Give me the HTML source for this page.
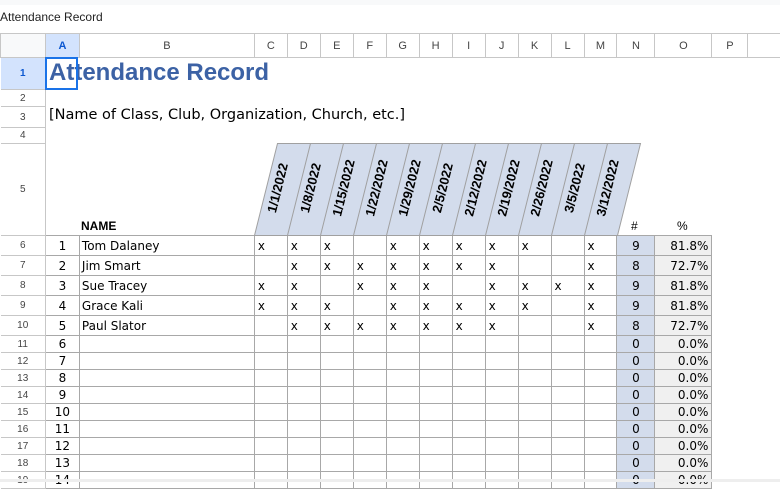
<!DOCTYPE html>
<html><head><meta charset="utf-8"><style>
*{margin:0;padding:0;box-sizing:border-box}
body{width:780px;height:482px;overflow:hidden;background:#fff;font-family:"Liberation Sans",sans-serif;position:relative}
#top{position:absolute;left:0;top:0;width:780px;height:5px;background:#f8f9fa}
#ttl{position:absolute;left:0;top:10px;font-size:12px;color:#222}
table{position:absolute;left:0;top:33px;border-collapse:collapse;table-layout:fixed}
td{padding:0;font-size:13px;white-space:nowrap;overflow:hidden;vertical-align:middle}
.ch td{height:24px;text-align:center;font-size:11px;color:#444;border:1px solid #c7c7c7;border-top:1px solid #c7c7c7}
td.rh{text-align:center;font-size:10px;color:#444;border-right:1px solid #c7c7c7;border-bottom:1px solid #c7c7c7;background:#fff}
td.sel{background:#d3e3fd;color:#0b57d0;font-weight:bold}
.d td{font-family:"DejaVu Sans",sans-serif;font-size:12px;color:#000;border:1px solid #a8a8a8}
.d td.rh{font-family:"Liberation Sans",sans-serif;font-size:10px;color:#444;border:none;border-right:1px solid #c7c7c7;border-bottom:1px solid #c7c7c7}
.d td.a{text-align:center}
.d td.b{padding-left:2px}
.d td.x{padding-left:3px}
.d td.n{background:#d3dcec;text-align:center}
.d td.o{background:#f0f0f0;text-align:right;padding-right:3px}
.d td.p,.d td.q{border:none}
.r6 td{height:20px}
.r11 td{height:17px}
#t1{position:absolute;left:49px;top:59px;font-size:24px;font-weight:bold;color:#3c62a5}
#t2{position:absolute;left:49px;top:107px;font-family:"DejaVu Sans",sans-serif;font-size:14.5px;color:#000}
#nm{position:absolute;left:81px;top:219px;font-size:12px;font-weight:bold}
#hs{position:absolute;left:631px;top:219px;font-size:12px}
#pc{position:absolute;left:677px;top:219px;font-size:12px}
#sel{position:absolute;left:45px;top:57px;width:33px;height:33px;border:2px solid #1a73e8}
#sb{position:absolute;left:0;top:479px;width:780px;height:3px;background:#eee}
</style></head><body>
<div id="top"></div>
<div id="ttl">Attendance Record</div>
<table>
<colgroup><col style="width:45px"><col style="width:34px"><col style="width:175px"><col style="width:33px"><col style="width:33px"><col style="width:33px"><col style="width:33px"><col style="width:33px"><col style="width:33px"><col style="width:33px"><col style="width:33px"><col style="width:33px"><col style="width:33px"><col style="width:33px"><col style="width:38px"><col style="width:57px"><col style="width:36px"><col style="width:32px"></colgroup>
<tr class="ch"><td style="background:#f8f9fa"></td><td class="sel" style="color:#0b57d0">A</td><td>B</td><td>C</td><td>D</td><td>E</td><td>F</td><td>G</td><td>H</td><td>I</td><td>J</td><td>K</td><td>L</td><td>M</td><td>N</td><td>O</td><td>P</td><td style="border-right:none"></td></tr>
<tr><td class="rh sel" style="height:32px">1</td><td colspan="17"></td></tr>
<tr><td class="rh" style="height:17px">2</td><td colspan="17"></td></tr>
<tr><td class="rh" style="height:21px">3</td><td colspan="17"></td></tr>
<tr><td class="rh" style="height:16px">4</td><td colspan="17"></td></tr>
<tr><td class="rh" style="height:92px">5</td><td colspan="17"></td></tr>
<tr class="d r6"><td class="rh">6</td><td class="a">1</td><td class="b">Tom Dalaney</td><td class="x">x</td><td class="x">x</td><td class="x">x</td><td></td><td class="x">x</td><td class="x">x</td><td class="x">x</td><td class="x">x</td><td class="x">x</td><td></td><td class="x">x</td><td class="n">9</td><td class="o">81.8%</td><td class="p"></td><td class="q"></td></tr>
<tr class="d r6"><td class="rh">7</td><td class="a">2</td><td class="b">Jim Smart</td><td></td><td class="x">x</td><td class="x">x</td><td class="x">x</td><td class="x">x</td><td class="x">x</td><td class="x">x</td><td class="x">x</td><td></td><td></td><td class="x">x</td><td class="n">8</td><td class="o">72.7%</td><td class="p"></td><td class="q"></td></tr>
<tr class="d r6"><td class="rh">8</td><td class="a">3</td><td class="b">Sue Tracey</td><td class="x">x</td><td class="x">x</td><td></td><td class="x">x</td><td class="x">x</td><td class="x">x</td><td></td><td class="x">x</td><td class="x">x</td><td class="x">x</td><td class="x">x</td><td class="n">9</td><td class="o">81.8%</td><td class="p"></td><td class="q"></td></tr>
<tr class="d r6"><td class="rh">9</td><td class="a">4</td><td class="b">Grace Kali</td><td class="x">x</td><td class="x">x</td><td class="x">x</td><td></td><td class="x">x</td><td class="x">x</td><td class="x">x</td><td class="x">x</td><td class="x">x</td><td></td><td class="x">x</td><td class="n">9</td><td class="o">81.8%</td><td class="p"></td><td class="q"></td></tr>
<tr class="d r6"><td class="rh">10</td><td class="a">5</td><td class="b">Paul Slator</td><td></td><td class="x">x</td><td class="x">x</td><td class="x">x</td><td class="x">x</td><td class="x">x</td><td class="x">x</td><td class="x">x</td><td></td><td></td><td class="x">x</td><td class="n">8</td><td class="o">72.7%</td><td class="p"></td><td class="q"></td></tr>
<tr class="d r11"><td class="rh">11</td><td class="a">6</td><td></td><td></td><td></td><td></td><td></td><td></td><td></td><td></td><td></td><td></td><td></td><td></td><td class="n">0</td><td class="o">0.0%</td><td class="p"></td><td class="q"></td></tr>
<tr class="d r11"><td class="rh">12</td><td class="a">7</td><td></td><td></td><td></td><td></td><td></td><td></td><td></td><td></td><td></td><td></td><td></td><td></td><td class="n">0</td><td class="o">0.0%</td><td class="p"></td><td class="q"></td></tr>
<tr class="d r11"><td class="rh">13</td><td class="a">8</td><td></td><td></td><td></td><td></td><td></td><td></td><td></td><td></td><td></td><td></td><td></td><td></td><td class="n">0</td><td class="o">0.0%</td><td class="p"></td><td class="q"></td></tr>
<tr class="d r11"><td class="rh">14</td><td class="a">9</td><td></td><td></td><td></td><td></td><td></td><td></td><td></td><td></td><td></td><td></td><td></td><td></td><td class="n">0</td><td class="o">0.0%</td><td class="p"></td><td class="q"></td></tr>
<tr class="d r11"><td class="rh">15</td><td class="a">10</td><td></td><td></td><td></td><td></td><td></td><td></td><td></td><td></td><td></td><td></td><td></td><td></td><td class="n">0</td><td class="o">0.0%</td><td class="p"></td><td class="q"></td></tr>
<tr class="d r11"><td class="rh">16</td><td class="a">11</td><td></td><td></td><td></td><td></td><td></td><td></td><td></td><td></td><td></td><td></td><td></td><td></td><td class="n">0</td><td class="o">0.0%</td><td class="p"></td><td class="q"></td></tr>
<tr class="d r11"><td class="rh">17</td><td class="a">12</td><td></td><td></td><td></td><td></td><td></td><td></td><td></td><td></td><td></td><td></td><td></td><td></td><td class="n">0</td><td class="o">0.0%</td><td class="p"></td><td class="q"></td></tr>
<tr class="d r11"><td class="rh">18</td><td class="a">13</td><td></td><td></td><td></td><td></td><td></td><td></td><td></td><td></td><td></td><td></td><td></td><td></td><td class="n">0</td><td class="o">0.0%</td><td class="p"></td><td class="q"></td></tr>
<tr class="d r11"><td class="rh">19</td><td class="a">14</td><td></td><td></td><td></td><td></td><td></td><td></td><td></td><td></td><td></td><td></td><td></td><td></td><td class="n">0</td><td class="o">0.0%</td><td class="p"></td><td class="q"></td></tr>
</table>
<div id="t1">Attendance Record</div>
<div id="t2">[Name of Class, Club, Organization, Church, etc.]</div>
<div id="nm">NAME</div>
<div id="hs">#</div>
<div id="pc">%</div>
<div id="sel"></div>
<svg style="position:absolute;left:0;top:0" width="780" height="482">
<g fill="#d3dcec" stroke="#a0a0a0" stroke-width="1">
<path d="M254.5 235.5 L277.5 143.5 L640.5 143.5 L617.5 235.5 Z"/>
<path d="M287.5 235.5 L310.5 143.5 M320.5 235.5 L343.5 143.5 M353.5 235.5 L376.5 143.5 M386.5 235.5 L409.5 143.5 M419.5 235.5 L442.5 143.5 M452.5 235.5 L475.5 143.5 M485.5 235.5 L508.5 143.5 M518.5 235.5 L541.5 143.5 M551.5 235.5 L574.5 143.5 M584.5 235.5 L607.5 143.5" fill="none"/>
</g>
<g font-family="Liberation Sans" font-size="13" font-weight="bold" fill="#000" text-anchor="middle">
<text transform="translate(278,188) rotate(-76)" dy="4">1/1/2022</text>
<text transform="translate(311,188) rotate(-76)" dy="4">1/8/2022</text>
<text transform="translate(344,188) rotate(-76)" dy="4">1/15/2022</text>
<text transform="translate(377,188) rotate(-76)" dy="4">1/22/2022</text>
<text transform="translate(410,188) rotate(-76)" dy="4">1/29/2022</text>
<text transform="translate(443,188) rotate(-76)" dy="4">2/5/2022</text>
<text transform="translate(476,188) rotate(-76)" dy="4">2/12/2022</text>
<text transform="translate(509,188) rotate(-76)" dy="4">2/19/2022</text>
<text transform="translate(542,188) rotate(-76)" dy="4">2/26/2022</text>
<text transform="translate(575,188) rotate(-76)" dy="4">3/5/2022</text>
<text transform="translate(608,188) rotate(-76)" dy="4">3/12/2022</text>
</g>
</svg>
<div id="sb"></div>
</body></html>
